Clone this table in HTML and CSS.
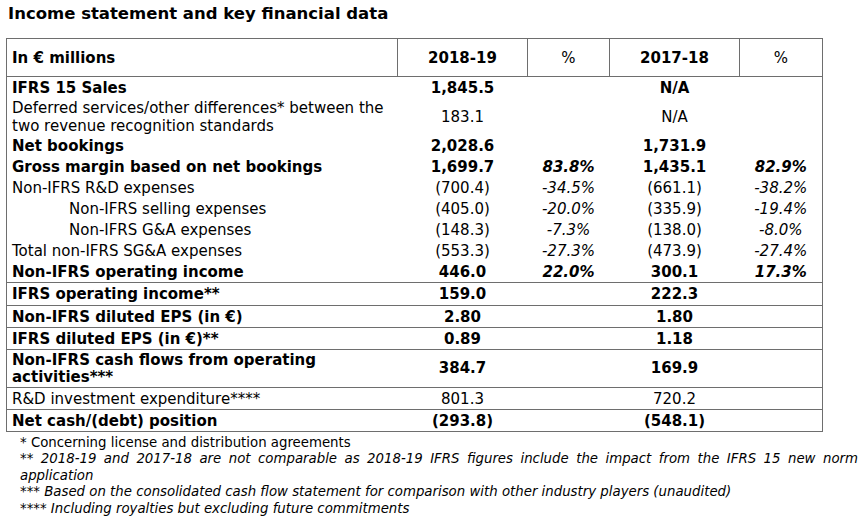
FILE: index.html
```html
<!DOCTYPE html>
<html>
<head>
<meta charset="utf-8">
<link rel="stylesheet" href="styles.css">
</head>
<body>
<h1 class="title">Income statement and key financial data</h1>
<table class="fin">
  <colgroup>
    <col class="c-label"><col class="c-val"><col class="c-pct"><col class="c-val"><col class="c-pct2">
  </colgroup>
  <thead>
    <tr>
      <th class="lbl">In € millions</th>
      <th>2018-19</th>
      <th class="pct-h">%</th>
      <th>2017-18</th>
      <th class="pct-h">%</th>
    </tr>
  </thead>
  <tbody>
    <tr class="b"><td class="lbl">IFRS 15 Sales</td><td>1,845.5</td><td></td><td>N/A</td><td></td></tr>
    <tr class="two"><td class="lbl">Deferred services/other differences* between the<br>two revenue recognition standards</td><td>183.1</td><td></td><td>N/A</td><td></td></tr>
    <tr class="b"><td class="lbl">Net bookings</td><td>2,028.6</td><td></td><td>1,731.9</td><td></td></tr>
    <tr class="b"><td class="lbl">Gross margin based on net bookings</td><td>1,699.7</td><td class="pc">83.8%</td><td>1,435.1</td><td class="pc">82.9%</td></tr>
    <tr><td class="lbl">Non-IFRS R&amp;D expenses</td><td>(700.4)</td><td class="pc">-34.5%</td><td>(661.1)</td><td class="pc">-38.2%</td></tr>
    <tr><td class="lbl ind">Non-IFRS selling expenses</td><td>(405.0)</td><td class="pc">-20.0%</td><td>(335.9)</td><td class="pc">-19.4%</td></tr>
    <tr><td class="lbl ind">Non-IFRS G&amp;A expenses</td><td>(148.3)</td><td class="pc">-7.3%</td><td>(138.0)</td><td class="pc">-8.0%</td></tr>
    <tr><td class="lbl">Total non-IFRS SG&amp;A expenses</td><td>(553.3)</td><td class="pc">-27.3%</td><td>(473.9)</td><td class="pc">-27.4%</td></tr>
    <tr class="b"><td class="lbl">Non-IFRS operating income</td><td>446.0</td><td class="pc">22.0%</td><td>300.1</td><td class="pc">17.3%</td></tr>
    <tr class="b ruled first"><td class="lbl">IFRS operating income**</td><td>159.0</td><td></td><td>222.3</td><td></td></tr>
    <tr class="b ruled"><td class="lbl">Non-IFRS diluted EPS (in €)</td><td>2.80</td><td></td><td>1.80</td><td></td></tr>
    <tr class="b ruled"><td class="lbl">IFRS diluted EPS (in €)**</td><td>0.89</td><td></td><td>1.18</td><td></td></tr>
    <tr class="b ruled tight"><td class="lbl">Non-IFRS cash flows from operating<br>activities***</td><td>384.7</td><td></td><td>169.9</td><td></td></tr>
    <tr class="ruled"><td class="lbl">R&amp;D investment expenditure****</td><td>801.3</td><td></td><td>720.2</td><td></td></tr>
    <tr class="b ruled"><td class="lbl">Net cash/(debt) position</td><td>(293.8)</td><td></td><td>(548.1)</td><td></td></tr>
  </tbody>
</table>
<div class="notes">
  <p class="up">* Concerning license and distribution agreements</p>
  <p class="just">** 2018-19 and 2017-18 are not comparable as 2018-19 IFRS figures include the impact from the IFRS 15 new norm application</p>
  <p>*** Based on the consolidated cash flow statement for comparison with other industry players (unaudited)</p>
  <p>**** Including royalties but excluding future commitments</p>
</div>
</body>
</html>
```

FILE: styles.css
```css
html, body {
  margin: 0;
  padding: 0;
  background: #fff;
  color: #000;
}
body {
  font-family: "DejaVu Sans", Verdana, sans-serif;
  font-size: 15px;
  padding: 0 0 0 6px;
}
.title {
  font-size: 16.5px;
  font-weight: bold;
  margin: 0;
  padding: 3px 0 0 2px;
  line-height: 22px;
  height: 38px;
  box-sizing: border-box;
}
.fin {
  border-collapse: collapse;
  table-layout: fixed;
  width: 816px;
  border: 1px solid #6e6e6e;
}
.c-label { width: 391px; }
.c-val { width: 130px; }
.c-pct { width: 82px; }
.c-pct2 { width: 83px; }
.fin th {
  border: 1px solid #6e6e6e;
  height: 37px;
  padding: 0 5px;
  font-weight: bold;
  text-align: center;
  vertical-align: middle;
}
.fin th.lbl { text-align: left; }
.fin th.pct-h { font-weight: normal; }
.fin td {
  padding: 1.5px 5px;
  line-height: 18px;
  text-align: center;
  vertical-align: middle;
  white-space: nowrap;
}
.fin tr.two td { padding: 0.5px 5px; }
.fin td.lbl { text-align: left; }
.fin td.ind { padding-left: 62px; }
.fin tr.b td { font-weight: bold; }
.fin td.pc { font-style: italic; }
.fin tr.ruled td {
  border-top: 1px solid #6e6e6e;
  padding: 1.5px 5px;
}
.fin tr.ruled.first td { padding: 2px 5px; }
.fin tr.ruled td.lbl { text-align: left; }
.fin tr.tight td {
  line-height: 16.5px;
  padding: 2px 5px;
}
.notes {
  width: 838px;
  padding: 1.5px 0 0 14px;
  font-family: "DejaVu Sans Condensed", "DejaVu Sans", sans-serif;
  font-stretch: condensed;
  font-size: 14.8px;
  font-style: italic;
  line-height: 16.5px;
}
.notes p { margin: 0; }
.notes p.up { font-style: normal; }
.notes p.just { text-align: justify; }
```
